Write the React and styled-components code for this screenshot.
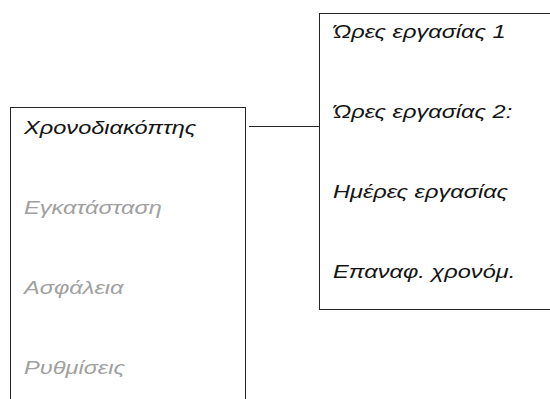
import React from "react";
import styled, { createGlobalStyle } from "styled-components";

const GlobalStyle = createGlobalStyle`
    html, body {
        margin: 0;
        padding: 0;
        background: #fff;
        overflow: hidden;
    }
    body {
        font-family: "Liberation Sans", Arial, sans-serif;
    }
`;

const Screen = styled.div`
    width: 550px;
    height: 399px;
    display: flex;
    align-items: flex-start;
    padding-left: 10px;
    box-sizing: border-box;
    overflow: hidden;
`;

const Menu = styled.div`
    box-sizing: border-box;
    flex-shrink: 0;
    display: flex;
    flex-direction: column;
    align-items: flex-start;
    gap: 58px;
    border: 1px solid #262626;
    margin-top: ${props => props.top}px;
    width: ${props => props.width}px;
    height: ${props => props.height}px;
    padding: ${props => props.padTop}px 0 0 13px;
    ${props => props.open && "border-bottom: none;"}
    ${props => props.cut && "border-right: none;"}
`;

/* the labels on this panel are drawn wide: a horizontally stretched sans */
const Item = styled.div`
    font-size: 18px;
    line-height: 22px;
    font-style: italic;
    white-space: nowrap;
    transform: scaleX(1.31);
    transform-origin: left center;
    color: ${props => (props.dim ? "#a0a0a0" : "#141414")};
`;

const Connector = styled.div`
    flex-shrink: 0;
    width: 70px;
    height: 1px;
    margin: 126px 0 0 3px;
    background: #262626;
`;

const mainItems = [
    { label: "Χρονοδιακόπτης" },
    { label: "Εγκατάσταση", dim: true },
    { label: "Ασφάλεια", dim: true },
    { label: "Ρυθμίσεις", dim: true },
];

const timerItems = ["Ώρες εργασίας 1", "Ώρες εργασίας 2:", "Ημέρες εργασίας", "Επαναφ. χρονόμ."];

export default () => (
    <>
        <GlobalStyle />
        <Screen>
            <Menu top={107} width={236} height={320} padTop={9} open>
                {mainItems.map(item => (
                    <Item key={item.label} dim={item.dim}>
                        {item.label}
                    </Item>
                ))}
            </Menu>
            <Connector />
            <Menu top={13} width={260} height={297} padTop={7} cut>
                {timerItems.map(label => (
                    <Item key={label}>{label}</Item>
                ))}
            </Menu>
        </Screen>
    </>
);
